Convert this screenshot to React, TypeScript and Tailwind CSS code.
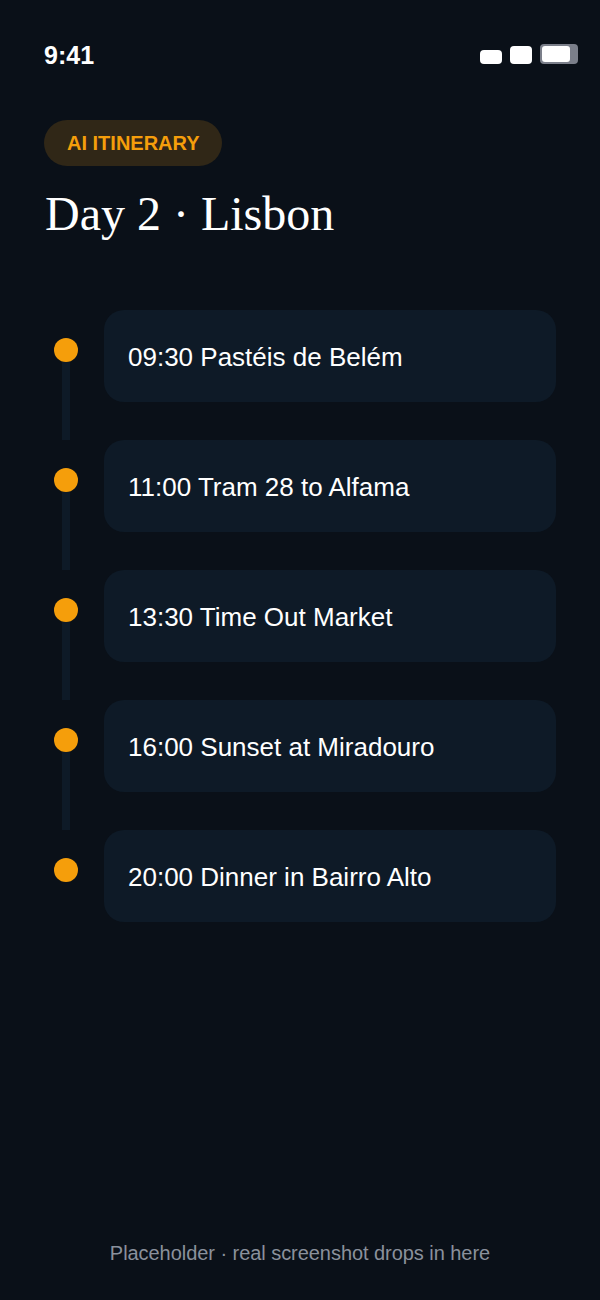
const stops = [
  "09:30 Pastéis de Belém",
  "11:00 Tram 28 to Alfama",
  "13:30 Time Out Market",
  "16:00 Sunset at Miradouro",
  "20:00 Dinner in Bairro Alto",
];

function StatusBar() {
  return (
    <div className="flex items-start justify-between pl-[44px] pr-[22px] pt-[40px] h-[72px]">
      <span className="text-[25px] leading-[30px] font-bold text-white">9:41</span>
      <div className="flex items-end gap-2 pt-[4px]">
        <div className="w-[22px] h-[14px] rounded-[4px] bg-white" />
        <div className="w-[22px] h-[18px] rounded-[4px] bg-white" />
        <div className="w-[38px] h-[20px] rounded-[4px] bg-[#7b7f8a] p-[2px]">
          <div className="w-[28px] h-[16px] rounded-[3px] bg-white" />
        </div>
      </div>
    </div>
  );
}

export default function App() {
  return (
    <div className="relative w-[600px] h-[1300px] bg-[#0a1018] font-['Liberation_Sans',Arial,sans-serif]">
      <StatusBar />
      <div className="px-[44px] pt-[48px]">
        <span className="inline-block rounded-full bg-[#302717] pl-[23px] pr-[22px] py-[11px] text-[20px] leading-[24px] font-bold text-[#f59e0b]">
          AI ITINERARY
        </span>
        <h1 className="mt-[14px] pl-px text-[48px] leading-[68px] font-normal text-white font-[Georgia,'Liberation_Serif',serif]">
          Day 2 · Lisbon
        </h1>
      </div>
      <div className="mt-[62px] pl-[44px] pr-[44px]">
        {stops.map((stop, i) => (
          <div key={stop} className="flex gap-4">
            <div className="flex w-[44px] flex-col items-center pt-[28px]">
              <div className="w-6 h-6 shrink-0 rounded-full bg-[#f59e0b]" />
              {i < stops.length - 1 && <div className="w-2 flex-1 bg-[#0e1a27]" />}
            </div>
            <div className={i < stops.length - 1 ? "flex-1 pb-[38px]" : "flex-1"}>
              <div className="flex h-[92px] items-center rounded-[20px] bg-[#0e1a27] px-6 pt-[2px] text-[26px] text-white">
                {stop}
              </div>
            </div>
          </div>
        ))}
      </div>
      <p className="absolute bottom-[32px] left-0 right-0 text-center text-[20px] leading-[30px] tracking-[-0.05px] text-[#8a919c]">
        Placeholder · real screenshot drops in here
      </p>
    </div>
  );
}
